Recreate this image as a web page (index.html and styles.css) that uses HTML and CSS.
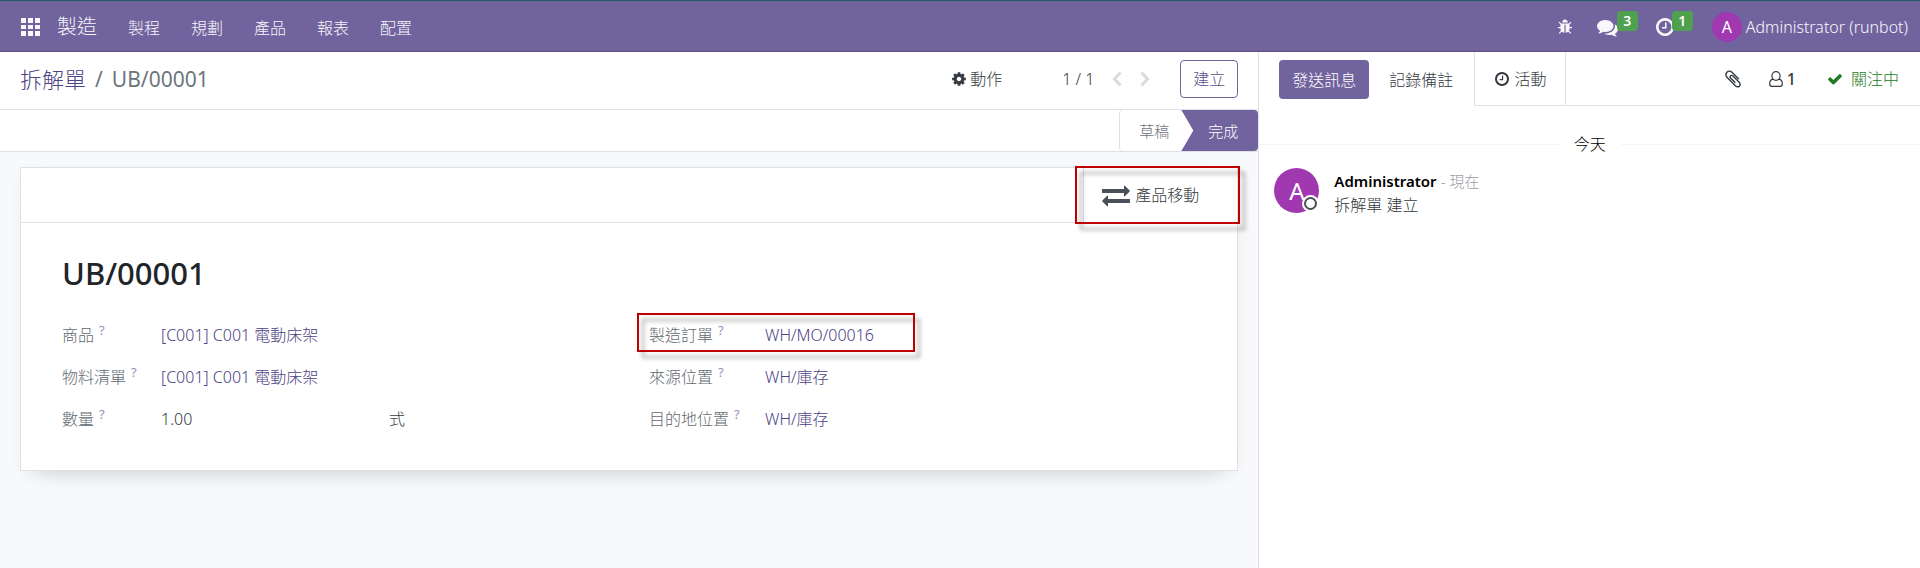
FILE: index.html
```html
<!DOCTYPE html>
<html lang="zh-Hant">
<head>
<meta charset="utf-8">
<title>UB/00001 - 拆解單</title>
<link rel="stylesheet" href="styles.css">
</head>
<body>
<svg class="sprite" aria-hidden="true">
  <symbol id="i-cog" viewBox="0 0 1792 1792"><path d="M1152 896q0-106-75-181t-181-75-181 75-75 181 75 181 181 75 181-75 75-181zm512-109v222q0 12-8 23t-20 13l-185 28q-19 54-39 91 35 50 107 138 10 12 10 25t-9 23q-27 37-99 108t-94 71q-12 0-26-9l-138-108q-44 23-91 38-16 136-29 186-7 28-36 28h-222q-14 0-24.5-8.500t-11.500-21.500l-28-184q-49-16-90-37l-141 107q-10 9-25 9-14 0-25-11-126-114-165-168-7-10-7-23 0-12 8-23 15-21 51-66.500t54-70.500q-27-50-41-99l-183-27q-13-2-21-12.500t-8-23.500v-222q0-12 8-23t19-13l186-28q14-46 39-92-40-57-107-138-10-12-10-24 0-10 9-23 26-36 98.500-107.500t94.500-71.500q13 0 26 10l138 107q44-23 91-38 16-136 29-186 7-28 36-28h222q14 0 24.500 8.500t11.500 21.500l28 184q49 16 90 37l142-107q9-9 24-9 13 0 25 10 129 119 165 170 7 8 7 22 0 12-8 23-15 21-51 66.500t-54 70.500q26 50 41 98l183 28q13 2 21 12.500t8 23.500z"/></symbol>
  <symbol id="i-check" viewBox="0 0 1792 1792"><path d="M1671 566q0 40-28 68l-724 724-136 136q-28 28-68 28t-68-28l-136-136-362-362q-28-28-28-68t28-68l136-136q28-28 68-28t68 28l294 295 656-657q28-28 68-28t68 28l136 136q28 28 28 68z"/></symbol>
  <symbol id="i-clock" viewBox="128 128 1536 1536"><path d="M1024 544v448q0 14-9 23t-23 9h-320q-14 0-23-9t-9-23v-64q0-14 9-23t23-9h224v-352q0-14 9-23t23-9h64q14 0 23 9t9 23zm416 352q0-148-73-273t-198-198-273-73-273 73-198 198-73 273 73 273 198 198 273 73 273-73 198-198 73-273zm224 0q0 209-103 385.500t-279.500 279.500-385.500 103-385.500-103-279.500-279.500-103-385.500 103-385.500 279.500-279.500 385.500-103 385.500 103 279.500 279.500 103 385.500z"/></symbol>
  <symbol id="i-comments" viewBox="0 0 1792 1792"><path d="M1408 768q0 139-94 257t-256.500 186.500-353.500 68.500q-86 0-176-16-124 88-278 128-36 9-86 16h-3q-11 0-20.500-8t-11.500-21q-1-3-1-6.500t.5-6.500 2-6l2.500-5 3.500-5.500 4-5 4.500-5 4-4.500q5-6 23-25t26-29.500 22.500-29 25-38.500 20.500-44q-124-72-195-177t-71-224q0-139 94-257t256.500-186.500 353.500-68.500 353.500 68.500 256.500 186.500 94 257zm384 256q0 120-71 224.500t-195 176.500q10 24 20.500 44t25 38.500 22.500 29 26 29.500 23 25q1 1 4 4.500t4.500 5 4 5 3.500 5.500l2.500 5 2 6 .5 6.500-1 6.500q-3 14-13 22t-22 7q-50-7-86-16-154-40-278-128-90 16-176 16-271 0-472-132 58 4 88 4 161 0 309-45t264-129q125-92 192-212t67-254q0-77-23-152 129 71 204 178t75 230z"/></symbol>
  <symbol id="i-exchange" viewBox="0 0 1792 1792"><path d="M1792 1184v192q0 13-9.500 22.500t-22.500 9.500h-1376v192q0 13-9.500 22.500t-22.500 9.500q-12 0-24-10l-319-320q-9-9-9-22 0-14 9-23l320-320q9-9 23-9 13 0 22.500 9.500t9.500 22.500v192h1376q13 0 22.500 9.500t9.500 22.500zm0-544q0 14-9 23l-320 320q-9 9-23 9-13 0-22.500-9.500t-9.500-22.500v-192h-1376q-13 0-22.500-9.500t-9.500-22.500v-192q0-13 9.500-22.500t22.500-9.500h1376v-192q0-14 9-23t23-9q12 0 24 10l319 319q9 9 9 23z"/></symbol>
  <symbol id="i-clip" viewBox="0 0 1792 1792"><path d="M1596 1385q0 117-79 196t-196 79q-135 0-235-100l-777-776q-113-115-113-271 0-159 110-270t269-111q158 0 273 113l605 606q10 10 10 22 0 16-30.500 46.500t-46.500 30.500q-13 0-23-10l-606-607q-79-77-181-77-106 0-179 75t-73 181q0 105 76 181l776 777q63 63 145 63 64 0 106-42t42-106q0-82-63-145l-581-581q-26-24-60-24-29 0-48 19t-19 48q0 32 25 59l410 410q10 10 10 22 0 16-31 47t-47 31q-12 0-22-10l-410-410q-63-61-63-149 0-82 57-139t139-57q88 0 149 63l581 581q100 98 100 235z"/></symbol>
  <symbol id="i-bug" viewBox="0 0 1792 1792"><path d="M1696 960q0 26-19 45t-45 19h-224q0 171-67 290l208 209q19 19 19 45t-19 45q-18 19-45 19t-45-19l-198-197q-5 5-15 13t-42 28.500-65 36.500-82 29-97 13v-896h-128v896q-51 0-101.500-13.500t-87-33-66-39-43.500-32.500l-15-14-183 207q-20 21-48 21-24 0-43-16-19-18-20.500-44.500t15.500-46.500l202-227q-58-114-58-274h-224q-26 0-45-19t-19-45 19-45 45-19h224v-294l-173-173q-19-19-19-45t19-45 45-19 45 19l173 173h844l173-173q19-19 45-19t45 19 19 45-19 45l-173 173v294h224q26 0 45 19t19 45zm-480-576h-640q0-133 93.500-226.500t226.500-93.500 226.500 93.500 93.500 226.500z"/></symbol>
  <symbol id="i-apps" viewBox="0 0 19 18"><path d="M0 0h5v5H0zM7 0h5v5H7zM14 0h5v5h-5zM0 7h5v4H0zM7 7h5v4H7zM14 7h5v4h-5zM0 13h5v5H0zM7 13h5v5H7zM14 13h5v5h-5z"/></symbol>
  <symbol id="i-user" viewBox="0 0 14 16"><path d="M4 8.200C1.800 8.600.7 10.500.7 13c0 1.500.8 2.400 2.100 2.400h8.400c1.300 0 2.100-.9 2.100-2.400 0-2.500-1.100-4.400-3.300-4.800M7 .7a4.100 4.300 0 1 0 0 8.600A4.100 4.300 0 1 0 7 .7z" fill="none" stroke="currentColor" stroke-width="1.200"/></symbol>
  <symbol id="i-prev" viewBox="0 0 10 16"><path d="M8.500 1.500L2.500 8l6 6.500" fill="none" stroke="currentColor" stroke-width="3"/></symbol>
  <symbol id="i-next" viewBox="0 0 10 16"><path d="M1.500 1.500l6 6.500-6 6.500" fill="none" stroke="currentColor" stroke-width="3"/></symbol>
</svg>

<header class="navbar">
  <button class="nav-btn apps" aria-label="應用程式"><svg class="ic-apps"><use href="#i-apps"/></svg></button>
  <a class="brand" href="#">製造</a>
  <nav class="menu">
    <a href="#">製程</a><a href="#">規劃</a><a href="#">產品</a><a href="#">報表</a><a href="#">配置</a>
  </nav>
  <div class="systray">
    <button class="nav-btn" aria-label="除錯"><svg class="ic-16"><use href="#i-bug"/></svg></button>
    <button class="nav-btn counter" aria-label="訊息"><svg class="ic-21"><use href="#i-comments"/></svg><span class="badge">3</span></button>
    <button class="nav-btn counter activity" aria-label="活動"><svg class="ic-18"><use href="#i-clock"/></svg><span class="badge">1</span></button>
    <button class="nav-btn user"><span class="avatar small">A</span><span>Administrator (runbot)</span></button>
  </div>
</header>

<main class="content">
  <section class="form-view">
    <div class="control-panel">
      <div class="breadcrumb"><a href="#">拆解單</a><span>/</span><span>UB/00001</span></div>
      <div class="cp-tools">
        <button class="action"><svg class="ic-16"><use href="#i-cog"/></svg>動作</button>
        <div class="pager">
          <span>1 / 1</span>
          <button aria-label="上一筆"><svg class="ic-arrow"><use href="#i-prev"/></svg></button>
          <button aria-label="下一筆"><svg class="ic-arrow"><use href="#i-next"/></svg></button>
        </div>
        <button class="create">建立</button>
      </div>
    </div>
    <div class="statusbar">
      <button class="stage draft">草稿</button><button class="stage done">完成</button>
    </div>
    <div class="sheet-bg">
      <div class="sheet">
        <div class="button-box">
          <button class="stat marked"><svg class="ic-28"><use href="#i-exchange"/></svg>產品移動</button>
        </div>
        <div class="sheet-body">
          <h1>UB/00001</h1>
          <div class="groups">
            <dl class="group left">
              <div class="field"><dt>商品<sup>?</sup></dt><dd><a href="#">[C001] C001 電動床架</a></dd></div>
              <div class="field"><dt>物料清單<sup>?</sup></dt><dd><a href="#">[C001] C001 電動床架</a></dd></div>
              <div class="field"><dt>數量<sup>?</sup></dt><dd class="qty"><span>1.00</span><span>式</span></dd></div>
            </dl>
            <dl class="group right">
              <div class="field marked"><dt>製造訂單<sup>?</sup></dt><dd><a href="#">WH/MO/00016</a></dd></div>
              <div class="field"><dt>來源位置<sup>?</sup></dt><dd><a href="#">WH/庫存</a></dd></div>
              <div class="field"><dt>目的地位置<sup>?</sup></dt><dd><a href="#">WH/庫存</a></dd></div>
            </dl>
          </div>
        </div>
      </div>
    </div>
  </section>

  <aside class="chatter">
    <div class="chat-top">
      <div class="compose">
        <button class="send">發送訊息</button>
        <button class="note">記錄備註</button>
      </div>
      <button class="chat-tab"><svg class="ic-14"><use href="#i-clock"/></svg>活動</button>
      <div class="chat-side">
        <button aria-label="附件"><svg class="ic-20"><use href="#i-clip"/></svg></button>
        <button class="followers"><svg class="ic-user"><use href="#i-user"/></svg>1</button>
        <button class="following"><svg class="ic-16"><use href="#i-check"/></svg>關注中</button>
      </div>
    </div>
    <div class="day"><span>今天</span></div>
    <article class="message">
      <div class="avatar large">A<span class="presence"></span></div>
      <div class="msg-text">
        <div class="msg-head"><strong>Administrator</strong> <small>- 現在</small></div>
        <div>拆解單 建立</div>
      </div>
    </article>
  </aside>
</main>
</body>
</html>
```
FILE: styles.css
```css
*, *::before, *::after { box-sizing: border-box; }

body {
  margin: 0;
  min-height: 100vh;
  display: flex;
  flex-direction: column;
  font: 300 16px/24px "Noto Sans", "Noto Sans CJK TC", sans-serif;
  color: #343a40;
  background: #fff;
}

a { color: #4c4285; text-decoration: none; }

button {
  font: inherit;
  color: inherit;
  background: none;
  border: 0;
  padding: 0;
  display: flex;
  align-items: center;
  white-space: nowrap;
}

svg { display: block; fill: currentColor; flex: none; }
.sprite { position: absolute; width: 0; height: 0; }
.ic-apps { width: 19px; height: 18px; }
.ic-14 { width: 14px; height: 14px; }
.ic-16 { width: 16px; height: 16px; }
.ic-18 { width: 18px; height: 18px; }
.ic-20 { width: 20px; height: 20px; }
.ic-21 { width: 21px; height: 21px; }
.ic-28 { width: 28px; height: 28px; }
.ic-user { width: 14px; height: 16px; }
.ic-arrow { width: 10px; height: 16px; }

/* Navbar */
.navbar {
  display: flex;
  align-items: center;
  height: 52px;
  padding: 2px 12px 0 21px;
  background: #71639e;
  border-top: 1px solid #1f5a5c;
  border-bottom: 1px solid #5a4f7f;
  color: #f8f7fb;
}
.navbar a { color: inherit; }
.brand { margin-left: 17px; font-size: 20px; line-height: 30px; }
.menu { display: flex; gap: 31px; margin-left: 31px; padding-top: 2px; }
.systray { display: flex; align-items: center; margin-left: auto; }
.counter { position: relative; margin-left: 24px; }
.activity { margin-left: 38px; }
.badge {
  position: absolute;
  left: 20px;
  top: -6px;
  width: 21px;
  height: 20px;
  border-radius: 4px;
  background: #50a14f;
  color: #fff;
  font-size: 14px;
  line-height: 20px;
  font-weight: 600;
  text-align: center;
}
.activity .badge { left: 16px; top: -7px; }
.user { margin-left: 38px; gap: 4px; }
.avatar {
  position: relative;
  display: flex;
  align-items: center;
  justify-content: center;
  flex: none;
  border-radius: 50%;
  background: #a038b0;
  color: #fff;
  font-weight: 400;
}
.small { width: 30px; height: 30px; }
.large { width: 45px; height: 45px; font-size: 24px; }

/* Layout */
.content { display: flex; flex: 1; }
.form-view {
  flex: 1259;
  display: flex;
  flex-direction: column;
  min-width: 0;
  border-right: 1px solid #dee2e6;
}
.chatter { flex: 661; min-width: 0; }

/* Control panel */
.control-panel {
  display: flex;
  align-items: center;
  justify-content: space-between;
  height: 58px;
  padding: 0 20px 3px;
  border-bottom: 1px solid #dee2e6;
}
.breadcrumb { display: flex; gap: 9px; font-size: 21px; line-height: 32px; font-weight: 400; color: #6c757d; }
.breadcrumb a { font-size: 22px; font-weight: 300; }
.cp-tools { display: flex; align-items: center; }
.action { gap: 3px; }
.pager { display: flex; align-items: center; margin-left: 60px; }
.pager button { margin-left: 18px; color: #d8dbdf; }
.create {
  height: 38px;
  margin-left: 30px;
  padding: 0 12px;
  border: 1px solid #71639e;
  border-radius: 4px;
  color: #5a4f8c;
}

/* Status bar */
.statusbar {
  display: flex;
  justify-content: flex-end;
  height: 42px;
  border-bottom: 1px solid #dee2e6;
}
.stage { font-size: 15px; }
.draft { padding: 0 12px 0 19px; border-left: 1px solid #dee2e6; border-radius: 4px 0 0 4px; color: #6c7278; }
.done {
  padding: 0 20px 0 27px;
  border-radius: 0 4px 4px 0;
  background: #71639e;
  color: #fff;
  clip-path: polygon(0 0, 100% 0, 100% 100%, 0 100%, 12px 50%);
}

/* Sheet */
.sheet-bg { flex: 1; padding: 15px 20px 0; background: #f8f9fa; }
.sheet {
  background: #fff;
  border: 1px solid #dee2e6;
  box-shadow: 0 16px 20px -16px rgba(0, 0, 0, .15), 0 5px 20px -5px rgba(0, 0, 0, .06);
}
.button-box {
  display: flex;
  justify-content: flex-end;
  height: 55px;
  border-bottom: 1px solid #dee2e6;
}
.stat { gap: 5px; width: 154px; padding: 0 0 0 18px; border-left: 1px solid #dee2e6; }
.stat svg { color: #495057; }
.sheet-body { padding: 30px 41px; }
h1 { margin: 0 0 21px; font-size: 31px; line-height: 40px; font-weight: 500; color: #212529; }
.groups { display: grid; grid-template-columns: 587px 1fr; }
.group { margin: 0; }
.field { display: flex; height: 42px; align-items: center; }
dt { color: #62686e; }
dd { margin: 0; }
.left dt { width: 99px; }
.right dt { width: 116px; }
sup { margin-left: 5px; font-size: 13px; line-height: 13px; color: #9a90c0; font-weight: 400; vertical-align: 6px; }
.qty { display: grid; grid-template-columns: 228px auto; }

/* Highlight frames */
.marked { position: relative; }
.marked::after {
  content: "";
  position: absolute;
  border: 2px solid #c00000;
  filter: drop-shadow(5px 6px 2px rgba(0, 0, 0, .35));
}
.stat.marked::after { left: -9px; right: -3px; top: -2px; bottom: -2px; }
.field.marked::after { left: -12px; width: 278px; top: -1px; bottom: 4px; }

/* Chatter */
.chat-top { display: flex; height: 54px; }
.compose { display: flex; align-items: flex-start; padding: 8px 21px 0 20px; }
.send { height: 39px; padding: 0 13px; border-radius: 4px; background: #71639e; color: #fff; }
.note { height: 39px; padding-left: 20px; }
.chat-tab {
  gap: 5px;
  padding: 0 19px 0 20px;
  border: 1px solid #dee2e6;
  border-top: 0;
}
.chat-side {
  display: flex;
  flex: 1;
  align-items: center;
  justify-content: flex-end;
  padding: 0 21px 0 0;
  border-bottom: 1px solid #dee2e6;
}
.followers { margin-left: 26px; gap: 4px; font-weight: 500; }
.following { margin-left: 31px; gap: 8px; color: #1f7a24; }
.day { display: flex; align-items: center; gap: 15px; margin-top: 26px; color: #000; }
.day::before, .day::after { content: ""; flex: 1; height: 1px; background: #f4f5f6; }
.message { display: flex; gap: 15px; padding: 12px 15px; }
.presence {
  position: absolute;
  right: 0;
  bottom: 1px;
  width: 17px;
  height: 17px;
  border-radius: 50%;
  background: #fff;
  display: grid;
  place-items: center;
}
.presence::after {
  content: "";
  width: 13px;
  height: 13px;
  border: 2px solid #495057;
  border-radius: 50%;
}
.msg-text { padding-top: 1px; }
.msg-head strong { color: #000; font-size: 15px; font-weight: 600; }
.msg-head small { font-size: 15px; color: #9a9ea2; }
```
